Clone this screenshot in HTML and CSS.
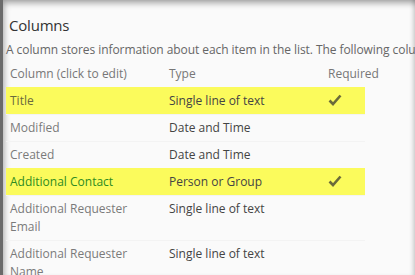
FILE: index.html
```html
<!DOCTYPE html>
<html>
<head>
<meta charset="utf-8">
<link rel="stylesheet" href="styles.css">
</head>
<body>
<div class="frame">
  <div class="page">
    <h2 class="title">Columns</h2>
    <p class="desc">A column stores information about each item in the list. The following columns are currently available in this list:</p>
    <div class="cols">
      <div class="row head">
        <div class="c1">Column (click to edit)</div>
        <div class="c2">Type</div>
        <div class="c3">Required</div>
      </div>
      <div class="row hl">
        <div class="c1">Title</div>
        <div class="c2">Single line of text</div>
        <div class="c3"><svg class="check" width="14" height="12" viewBox="0 0 14 12"><path d="M1.5 6.5 L5 10 L12.5 1.5" fill="none" stroke="#6b6b3a" stroke-width="2.6"/></svg></div>
      </div>
      <div class="row">
        <div class="c1">Modified</div>
        <div class="c2">Date and Time</div>
        <div class="c3"></div>
      </div>
      <div class="row">
        <div class="c1">Created</div>
        <div class="c2">Date and Time</div>
        <div class="c3"></div>
      </div>
      <div class="row hl">
        <div class="c1 green">Additional Contact</div>
        <div class="c2">Person or Group</div>
        <div class="c3"><svg class="check" width="14" height="12" viewBox="0 0 14 12"><path d="M1.5 6.5 L5 10 L12.5 1.5" fill="none" stroke="#6b6b3a" stroke-width="2.6"/></svg></div>
      </div>
      <div class="row">
        <div class="c1">Additional Requester Email</div>
        <div class="c2">Single line of text</div>
        <div class="c3"></div>
      </div>
      <div class="row">
        <div class="c1">Additional Requester Name</div>
        <div class="c2">Single line of text</div>
        <div class="c3"></div>
      </div>
    </div>
  </div>
</div>
</body>
</html>
```
FILE: styles.css
```css
html, body {
  margin: 0;
  padding: 0;
  background: #fafafa;
}
.frame {
  width: 415px;
  height: 275px;
  overflow: hidden;
  position: relative;
  background: #fafafa;
  font-family: "Open Sans", "Noto Sans", sans-serif;
  box-shadow: inset 3px 0 0 #6a6a6a, inset 7px 6px 6px -3px rgba(0,0,0,0.35), inset -4px 0 5px -3px rgba(0,0,0,0.25);
}
.page {
  padding: 16px 0 0 0;
}
.title {
  margin: 0 0 7px 9px;
  font-size: 15px;
  line-height: 18px;
  font-weight: normal;
  color: #333;
  letter-spacing: -0.2px;
}
.desc {
  margin: 0 0 1px 6px;
  font-size: 12px;
  line-height: 18px;
  color: #666;
  white-space: nowrap;
  letter-spacing: -0.07px;
}
.cols {
  margin-left: 6px;
  width: 359px;
}
.row {
  display: grid;
  grid-template-columns: 159px 159px 41px;
  font-size: 12px;
  line-height: 18px;
  border-top: 1px solid #f3f3f3;
}
.row > div {
  padding: 4px 0 4px 4px;
}
.head {
  border-top: none;
  color: #777;
  padding-top: 1px;
}
.row .c1 { color: #7a7a7a; padding-right: 20px; }
.row .c2 { color: #444; }
.head .c1, .head .c2, .head .c3 { color: #777; }
.hl {
  background: #fbfb5c;
  border-top-color: #fbfb5c;
}
.hl .c1 { color: #6a6a3e; }
.hl .c1.green { color: #2e8b22; }
.check {
  display: block;
  margin-top: 2px;
}
```
